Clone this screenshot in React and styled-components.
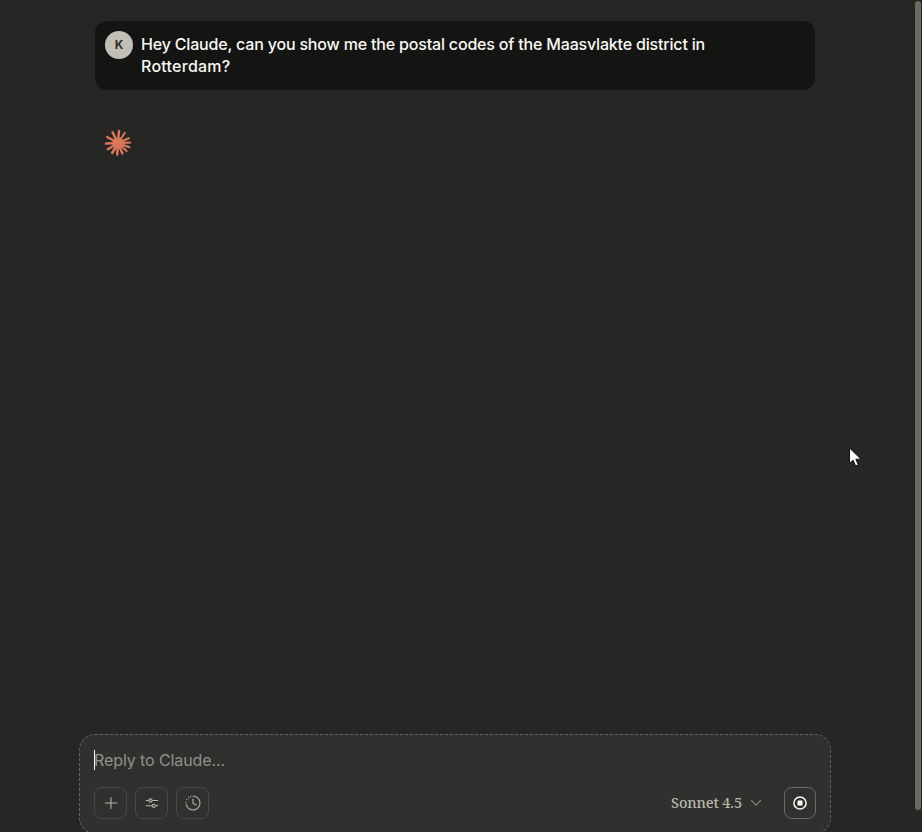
import React from "react";
import styled, { createGlobalStyle } from "styled-components";

const Global = createGlobalStyle`
  * { box-sizing: border-box; }
  body { margin: 0; background: #262624; overflow: hidden; }
`;

const Page = styled.div`
  display: flex;
  width: 922px;
  height: 832px;
  overflow: hidden;
  background: #262624;
  font-family: Inter, "Liberation Sans", sans-serif;
`;

const Chat = styled.main`
  flex: 1;
  display: flex;
  flex-direction: column;
  padding: 21px 84px 0 79px;
`;

const ScrollTrack = styled.div`
  width: 7px;
  flex: none;
  padding-top: 1px;
`;

const ScrollThumb = styled.div`
  width: 6px;
  height: 809px;
  border-radius: 3px;
  background: #6b6a62;
`;

const Thread = styled.section`
  flex: 1;
  padding: 0 16px;
`;

const UserMessage = styled.article`
  display: flex;
  gap: 8px;
  height: 69px;
  padding: 10px;
  border-radius: 12px;
  background: #141413;
`;

const Avatar = styled.div`
  display: grid;
  place-items: center;
  flex: none;
  width: 28px;
  height: 28px;
  border-radius: 50%;
  padding-bottom: 1px;
  background: #c2c0b6;
  color: #30302e;
  font-size: 12px;
  font-weight: 700;
`;

const MessageText = styled.p`
  margin: 2px 0 0;
  color: #faf9f5;
  font-size: 16px;
  font-weight: 500;
  line-height: 22px;
  letter-spacing: -0.18px;
  white-space: nowrap;
`;

const MessageEnd = styled.span`
  letter-spacing: 0.25px;
`;

const Thinking = styled.div`
  display: flex;
  padding: 39px 9px 0;
  color: #d97757;
`;

const Composer = styled.form`
  flex: none;
  height: 100px;
  margin-bottom: -2px;
  display: flex;
  flex-direction: column;
  justify-content: space-between;
  padding: 14px;
  border: 1px dashed #65645e;
  border-radius: 16px;
  background: #30302e;
`;

const Prompt = styled.div`
  display: flex;
  align-items: center;
  height: 22px;
  color: #91908a;
  font-size: 16px;
  letter-spacing: -0.1px;
  white-space: nowrap;
`;

const Caret = styled.span`
  width: 1px;
  height: 20px;
  margin-right: -1px;
  background: #faf9f5;
`;

const Toolbar = styled.div`
  display: flex;
  align-items: center;
  gap: 8px;
`;

const ToolButton = styled.button`
  display: grid;
  place-items: center;
  width: ${(p) => (p.$strong ? 32 : 33)}px;
  height: 32px;
  padding: 0;
  border: 1px solid ${(p) => (p.$strong ? "#6a6963" : "#484845")};
  border-radius: 8px;
  background: transparent;
  color: ${(p) => (p.$strong ? "#faf9f5" : "#b5b3aa")};
`;

const ModelPicker = styled.button`
  display: flex;
  align-items: center;
  gap: 8px;
  margin-left: auto;
  margin-right: 14px;
  padding: 0;
  border: 0;
  background: transparent;
  color: #b8b6ad;
`;

const ModelName = styled.span`
  padding-bottom: 2px;
  font-family: "Noto Serif", "Liberation Serif", serif;
  font-size: 14.5px;
  font-weight: 500;
  line-height: 20px;
  letter-spacing: -0.15px;
`;

const Pointer = styled.svg`
  position: absolute;
  left: 848px;
  top: 447px;
`;

const Burst = () => (
  <svg width="28" height="28" viewBox="-14 -14 28 28" stroke="currentColor" strokeWidth="2.5" strokeLinecap="round">
    <circle r="5.6" fill="currentColor" stroke="none" />
    <path d="M0 0 1-12M0 0-5.4-10.6M0 0-10.8-6M0 0-12 .6M0 0-10.2 6.2M0 0-5.8 10M0 0-.8 11.4M0 0 4.4 10.4" />
    <path d="M0 0 8.6 8M0 0 11.4 4.2M0 0 12-.3M0 0 10.8-4.8M0 0 6.8-10" strokeWidth="2.2" />
  </svg>
);

const PlusIcon = () => (
  <svg width="16" height="16" viewBox="0 0 16 16" fill="none" stroke="currentColor" strokeWidth="1.1" strokeLinecap="round">
    <path d="M8 2.5v11M2.5 8h11" />
  </svg>
);

const SlidersIcon = () => (
  <svg width="16" height="16" viewBox="0 0 16 16" fill="none" stroke="currentColor" strokeWidth="1.1" strokeLinecap="round">
    <path d="M2.2 5.5h2.7M8.1 5.5h5.7M2.2 10.8h6M11.4 10.8h2.4" />
    <circle cx="6.5" cy="5.5" r="1.6" />
    <circle cx="9.8" cy="10.8" r="1.6" />
  </svg>
);

const HistoryIcon = () => (
  <svg width="18" height="18" viewBox="0 0 18 18" fill="none" stroke="currentColor" strokeWidth="1.1" strokeLinecap="round">
    <path d="M9 2a7 7 0 1 1-6.8 8.6M9 5v4.3l3.2 1.8" />
    <path d="M2 8.5v.1M2.9 5.6v.1M4.6 3.6v.1M6.6 2.4v.1" strokeWidth="1.3" />
  </svg>
);

const ChevronIcon = () => (
  <svg width="12" height="8" viewBox="0 0 12 8" fill="none" stroke="#85847c" strokeWidth="1.1" strokeLinecap="round">
    <path d="m1.5 1.5 4.5 4.7 4.5-4.7" />
  </svg>
);

const StopIcon = () => (
  <svg width="16" height="16" viewBox="0 0 16 16">
    <circle cx="8" cy="8" r="6.1" fill="none" stroke="currentColor" strokeWidth="1.5" />
    <rect x="5.5" y="5.5" width="5" height="5" rx=".6" fill="currentColor" />
  </svg>
);

export default function App() {
  return (
    <Page>
      <Global />
      <Chat>
        <Thread>
          <UserMessage>
            <Avatar>K</Avatar>
            <MessageText>
              Hey Claude, can you show me the postal codes of the Maasvlakte district in
              <br />
              <MessageEnd>Rotterdam?</MessageEnd>
            </MessageText>
          </UserMessage>
          <Thinking><Burst /></Thinking>
        </Thread>
        <Composer>
          <Prompt><Caret />Reply to Claude...</Prompt>
          <Toolbar>
            <ToolButton type="button" aria-label="Add"><PlusIcon /></ToolButton>
            <ToolButton type="button" aria-label="Tools"><SlidersIcon /></ToolButton>
            <ToolButton type="button" aria-label="History"><HistoryIcon /></ToolButton>
            <ModelPicker type="button"><ModelName>Sonnet 4.5</ModelName><ChevronIcon /></ModelPicker>
            <ToolButton type="button" $strong aria-label="Stop"><StopIcon /></ToolButton>
          </Toolbar>
        </Composer>
      </Chat>
      <ScrollTrack><ScrollThumb /></ScrollTrack>
      <Pointer width="14" height="21" viewBox="0 0 14 21">
        <path d="M1.5 1v15.5l3.6-3.3 2.5 5.7 2.7-1.2-2.5-5.5H13z" fill="#fff" stroke="#111" strokeWidth="1" />
      </Pointer>
    </Page>
  );
}
